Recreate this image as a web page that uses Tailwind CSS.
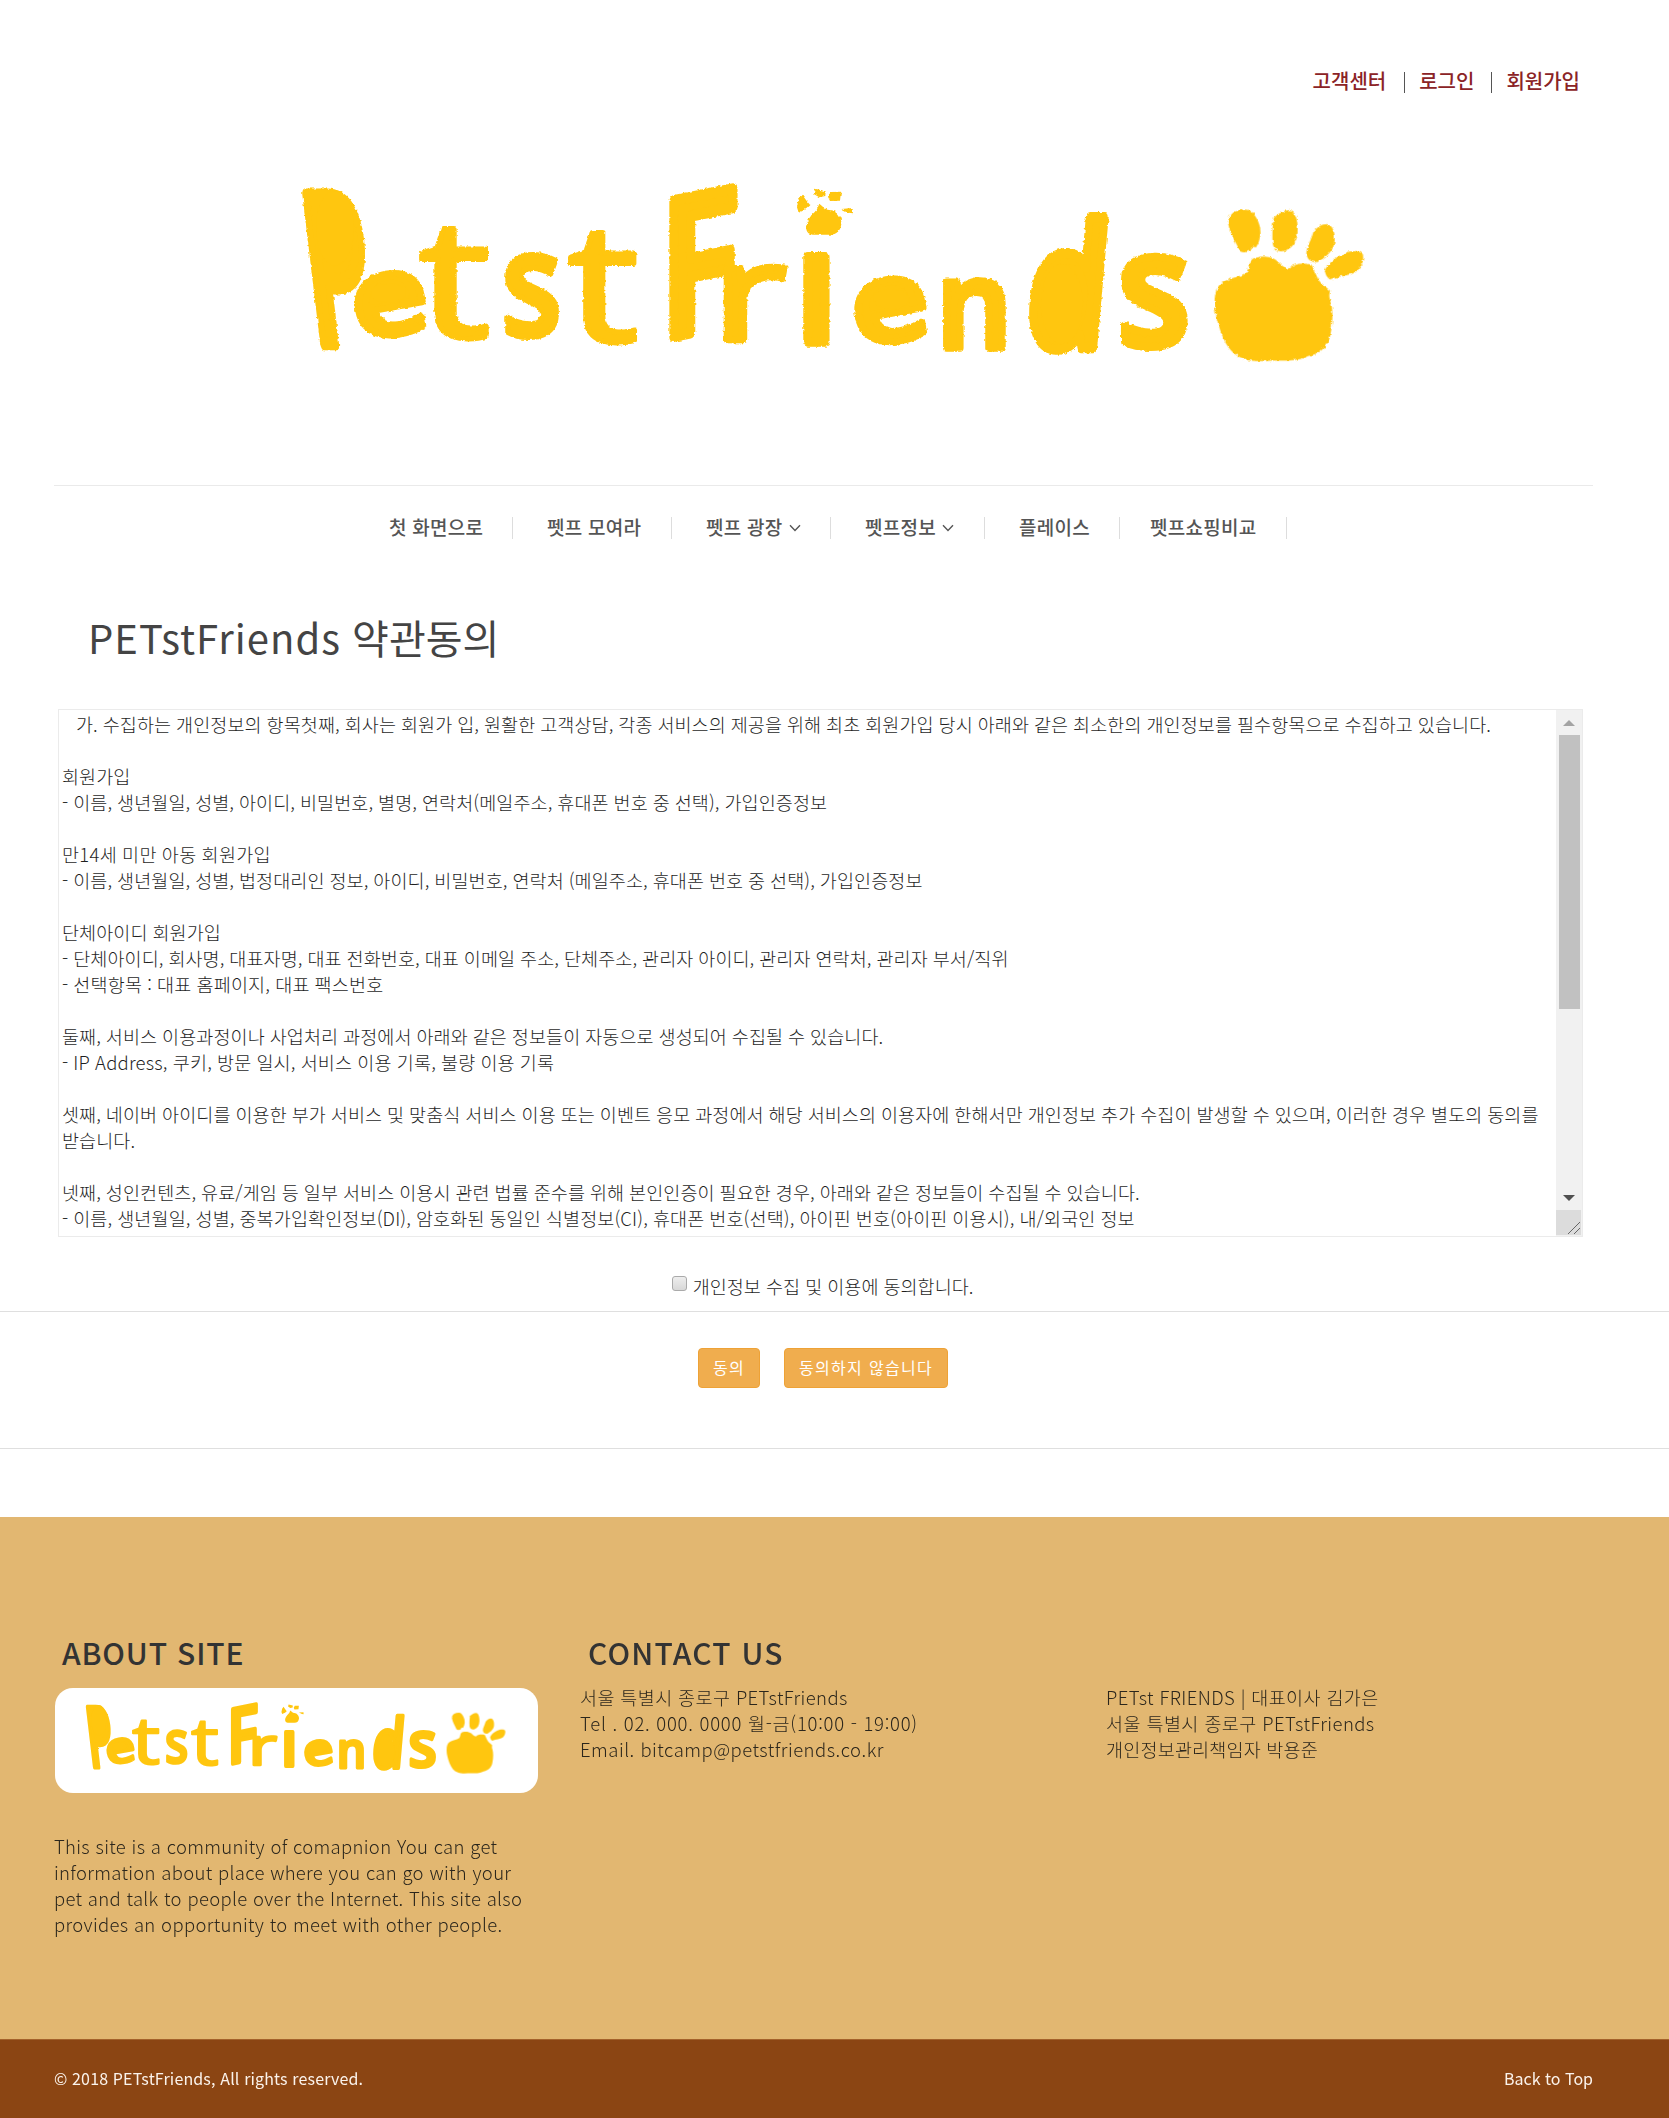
<!DOCTYPE html>
<html lang="ko">
<head>
<meta charset="utf-8">
<title>PETstFriends</title>
<script src="https://cdn.jsdelivr.net/npm/@tailwindcss/browser@4"></script>
</head>
<body class="bg-white font-['Noto_Sans_CJK_KR',sans-serif] text-[#333]">

<!-- shared crayon logo -->
<svg class="hidden">
  <filter id="crayon" x="-2%" y="-5%" width="104%" height="110%">
    <feTurbulence type="fractalNoise" baseFrequency="0.3" numOctaves="2" seed="4"/>
    <feDisplacementMap in="SourceGraphic" scale="3.5" xChannelSelector="R" yChannelSelector="G"/>
    <feGaussianBlur stdDeviation="0.7"/>
  </filter>
  <symbol id="logo" viewBox="290 160 1090 215" preserveAspectRatio="none">
    <g filter="url(#crayon)">
    <g fill="#ffc60f" stroke="#ffc60f" stroke-width="6" stroke-linejoin="round" font-family="Open Sans" font-size="100" font-weight="600">
      <text transform="matrix(1.06 0 .25 2.09 313.5 344)">P</text>
      <text transform="rotate(-10 387 305) matrix(1.32 0 0 1.1 352 335)">e</text>
      <text transform="matrix(2 0 0 1.65 419 337)" font-weight="400" stroke-width="3">t</text>
      <text transform="matrix(1.23 0 0 1.47 501.8 336)" stroke-width="4">s</text>
      <text transform="matrix(1.98 0 0 1.65 568 341)" font-weight="400" stroke-width="3">t</text>
      <text transform="matrix(1.47 -.29 0 1.9 660 339)">F</text>
      <text transform="matrix(1.78 0 0 1.33 713 340)" font-weight="400" stroke-width="5">r</text>
      <text transform="matrix(1.5 0 0 1.58 795.5 342.3)">ı</text>
      <text transform="rotate(-10 890 312) matrix(1.34 0 0 1.12 852 341)">e</text>
      <text transform="matrix(1.17 0 0 1.21 937 348.4)">n</text>
      <text transform="matrix(1.3 0 -.15 1.72 1023 348)">d</text>
      <text transform="matrix(1.49 0 0 1.61 1117.5 344.6)" stroke-width="5">s</text>
    </g>
    <g fill="#ffc60f">
      <ellipse cx="335" cy="228" rx="19" ry="38"/>
      <ellipse cx="388" cy="293" rx="18" ry="10"/>
      <ellipse cx="891" cy="299" rx="18" ry="10"/>
      <ellipse cx="1062" cy="304" rx="21" ry="40"/>
      <g transform="translate(650 160) scale(.3333)">
        <path d="M508 131C518 138 524 148 538 150C560 152 576 172 574 192C572 212 560 224 540 224H488C470 222 466 208 470 192C476 172 492 158 500 150Z"/>
        <path d="M457 104L468 120L481 136L468 148L446 158L441 142L446 118Z"/>
        <path d="M495 86L527 94L526 108L508 112L491 102ZM542 96L573 95L570 122L540 123L534 110ZM574 147L608 144L609 160L596 158Z"/>
      </g>
      <g transform="translate(1010 160) scale(.3333)">
        <path d="M726 298C742 286 784 288 800 302C812 312 820 324 836 326C850 310 880 308 904 314C914 330 918 350 932 368L960 392C958 402 956 410 962 424C970 450 968 490 962 520C956 560 930 582 894 588C870 602 830 602 800 602C770 602 730 608 700 596C670 586 650 560 638 530C630 510 620 480 616 455C612 420 612 380 640 366C660 354 690 350 708 340C718 330 716 310 726 298Z"/>
        <path d="M672 156C690 148 718 144 728 158C744 178 754 200 751 226C749 240 745 252 738 262C728 258 722 262 722 272C712 278 700 278 690 274C680 250 660 222 655 192C652 176 660 166 672 156Z"/>
        <path d="M838 150C856 152 864 180 863 212C862 244 850 262 826 272C810 278 790 272 788 248C786 222 788 190 792 172C802 164 820 150 838 150Z"/>
        <path d="M950 192C966 194 976 214 974 240C974 270 950 290 922 306C906 308 890 300 889 278C890 260 904 240 910 216C920 202 934 192 950 192Z"/>
        <path d="M1000 282C1016 272 1050 268 1058 282C1064 300 1054 320 1040 334C1020 348 990 346 960 358C950 352 946 342 944 330C958 308 976 292 1000 282Z"/>
      </g>
    </g>
    </g>
  </symbol>
</svg>

<header class="flex flex-col pr-[76px] pl-[54px]">
  <nav class="flex h-[160px] items-start justify-end pt-[66px] text-[20px] leading-[30px] font-medium text-[#8b2326]">
    <a class="mr-[18px]">고객센터</a>
    <span class="mt-[6px] h-[21px] w-px bg-[#555]"></span>
    <a class="mr-[17px] ml-[14px]">로그인</a>
    <span class="mt-[6px] h-[21px] w-px bg-[#555]"></span>
    <a class="mr-[13px] ml-[14px]">회원가입</a>
  </nav>
  <svg class="ml-[236px] h-[215px] w-[1090px]"><use href="#logo"/></svg>
  <div class="mt-[110px] h-px bg-[#eaeaea]"></div>
  <nav class="flex h-[83px] items-center pl-[335px] text-[19px] tracking-[0.25px] font-medium whitespace-nowrap text-[#555]">
    <div class="flex h-[22px] w-[124px] items-center border-r border-[#ddd]">첫 화면으로</div>
    <div class="flex h-[22px] w-[159px] items-center border-r border-[#ddd] pl-[34px]">펫프 모여라</div>
    <div class="flex h-[22px] w-[159px] items-center gap-[6px] border-r border-[#ddd] pl-[34px]">펫프 광장<svg class="h-[8px] w-[12px]" viewBox="0 0 12 8" fill="none" stroke="#555" stroke-width="1.4"><path d="M1 1.2L6 6.4L11 1.2"/></svg></div>
    <div class="flex h-[22px] w-[154px] items-center gap-[6px] border-r border-[#ddd] pl-[34px]">펫프정보<svg class="h-[8px] w-[12px]" viewBox="0 0 12 8" fill="none" stroke="#555" stroke-width="1.4"><path d="M1 1.2L6 6.4L11 1.2"/></svg></div>
    <div class="flex h-[22px] w-[135px] items-center border-r border-[#ddd] pl-[34px]">플레이스</div>
    <div class="flex h-[22px] w-[167px] items-center border-r border-[#ddd] pl-[30px]">펫프쇼핑비교</div>
  </nav>
</header>

<main>
  <h1 class="mt-[38px] pl-[88px] text-[40px] leading-[60px] text-[#444]"><span class="tracking-[1px]">PETstFriends</span> 약관동의</h1>

  <div class="mt-[42px] ml-[58px] flex h-[528px] w-[1525px] border border-[#ebebeb]">
    <div class="flex-1 overflow-hidden pt-px pl-[3px] text-[18.5px] leading-[26px] font-light tracking-[0.1px] text-[#1f1f1f] [word-spacing:-0.4px] [&>p]:whitespace-pre">
      <p class="pl-[14px]">가. 수집하는 개인정보의 항목첫째, 회사는 회원가 입, 원활한 고객상담, 각종 서비스의 제공을 위해 최초 회원가입 당시 아래와 같은 최소한의 개인정보를 필수항목으로 수집하고 있습니다.</p>
      <p class="mt-[26px]">회원가입</p>
      <p>- 이름, 생년월일, 성별, 아이디, 비밀번호, 별명, 연락처(메일주소, 휴대폰 번호 중 선택), 가입인증정보</p>
      <p class="mt-[26px] tracking-[0.3px]">만14세 미만 아동 회원가입</p>
      <p>- 이름, 생년월일, 성별, 법정대리인 정보, 아이디, 비밀번호, 연락처 (메일주소, 휴대폰 번호 중 선택), 가입인증정보</p>
      <p class="mt-[26px]">단체아이디 회원가입</p>
      <p>- 단체아이디, 회사명, 대표자명, 대표 전화번호, 대표 이메일 주소, 단체주소, 관리자 아이디, 관리자 연락처, 관리자 부서/직위</p>
      <p class="tracking-[0.2px]">- 선택항목 : 대표 홈페이지, 대표 팩스번호</p>
      <p class="mt-[26px]">둘째, 서비스 이용과정이나 사업처리 과정에서 아래와 같은 정보들이 자동으로 생성되어 수집될 수 있습니다.</p>
      <p class="tracking-[0.2px]">- IP Address, 쿠키, 방문 일시, 서비스 이용 기록, 불량 이용 기록</p>
      <p class="mt-[26px]">셋째, 네이버 아이디를 이용한 부가 서비스 및 맞춤식 서비스 이용 또는 이벤트 응모 과정에서 해당 서비스의 이용자에 한해서만 개인정보 추가 수집이 발생할 수 있으며, 이러한 경우 별도의 동의를</p>
      <p>받습니다.</p>
      <p class="mt-[26px]">넷째, 성인컨텐츠, 유료/게임 등 일부 서비스 이용시 관련 법률 준수를 위해 본인인증이 필요한 경우, 아래와 같은 정보들이 수집될 수 있습니다.</p>
      <p class="tracking-[0.13px]">- 이름, 생년월일, 성별, 중복가입확인정보(DI), 암호화된 동일인 식별정보(CI), 휴대폰 번호(선택), 아이핀 번호(아이핀 이용시), 내/외국인 정보</p>
    </div>
    <div class="flex w-[26px] flex-col items-center bg-[#f1f1f1]">
      <svg class="mt-[10px] h-[6px] w-[12px]" viewBox="0 0 12 6"><path d="M0 6L6 0L12 6Z" fill="#a3a3a3"/></svg>
      <div class="mt-[9px] h-[274px] w-[21px] bg-[#c1c1c1]"></div>
      <svg class="mt-[186px] h-[6px] w-[12px]" viewBox="0 0 12 6"><path d="M0 0L6 6L12 0Z" fill="#505050"/></svg>
      <svg class="mt-[9px] mr-px h-[25px] w-[25px] bg-[#dcdcdc]" viewBox="0 0 25 25" stroke="#666" stroke-width="1"><path d="M12 24L24 12M18 24L24 18"/></svg>
    </div>
  </div>

  <label class="mt-[35px] flex h-[39px] items-start justify-center pr-[24px] text-[18.5px] leading-[28px] font-light text-[#1f1f1f]">
    <span class="mt-[4px] mr-[6px] size-[15px] rounded-[3px] border border-[#aaa] bg-linear-to-b from-[#eee] to-[#d8d8d8]"></span>개인정보 수집 및 이용에 동의합니다.
  </label>
  <div class="flex h-[138px] items-start gap-[24px] border-y border-[#dfdfdf] pt-[36px] pl-[698px] text-[16px] tracking-[1.3px] text-white">
    <button class="h-10 rounded border border-[#eea236] bg-[#f0ad4e] px-[14px] pb-[3px]">동의</button>
    <button class="h-10 rounded border border-[#eea236] bg-[#f0ad4e] px-[14px] pb-[3px]">동의하지 않습니다</button>
  </div>
</main>

<footer class="mt-[68px]">
  <div class="grid h-[523px] grid-cols-[526px_526px_1fr] border-b border-[#a4622a] bg-[#e2b771] pt-[113px] pl-[54px] text-[18.5px] leading-[26px] font-light tracking-[0.31px] text-[#2b261c]">
    <section>
      <h2 class="pl-[8px] text-[30px] leading-[44px] font-medium tracking-[0.85px] text-[#333]">ABOUT SITE</h2>
      <div class="mt-[14px] ml-px h-[105px] w-[483px] rounded-[18px] bg-white pt-[5px] pl-[26px]">
        <svg class="h-[86px] w-[431px]"><use href="#logo"/></svg>
      </div>
      <p class="mt-[40px] whitespace-nowrap">This site is a community of comapnion You can get<br>information about place where you can go with your<br>pet and talk to people over the Internet. This site also<br>provides an opportunity to meet with other people.</p>
    </section>
    <section>
      <h2 class="pl-[8px] text-[30px] leading-[44px] font-medium tracking-[1.2px] text-[#333]">CONTACT US</h2>
      <p class="mt-[10px] tracking-[0.38px]">서울 특별시 종로구 PETstFriends</p>
      <p class="tracking-[0.73px]">Tel . 02. 000. 0000 월-금(10:00 - 19:00)</p>
      <p class="tracking-[0.5px]">Email. bitcamp@petstfriends.co.kr</p>
    </section>
    <section class="pt-[54px]">
      <p class="tracking-[0.38px]">PETst FRIENDS | 대표이사 김가은</p>
      <p class="tracking-[0.42px]">서울 특별시 종로구 PETstFriends</p>
      <p class="tracking-[0.2px]">개인정보관리책임자 박용준</p>
    </section>
  </div>
  <div class="flex h-[78px] items-center justify-between bg-[#8b4513] pr-[76px] pb-[2px] pl-[54px] text-[16px] text-[#fbf3ec]">
    <span class="tracking-[0.15px]">© 2018 PETstFriends, All rights reserved.</span>
    <a>Back to Top</a>
  </div>
</footer>
</body>
</html>
